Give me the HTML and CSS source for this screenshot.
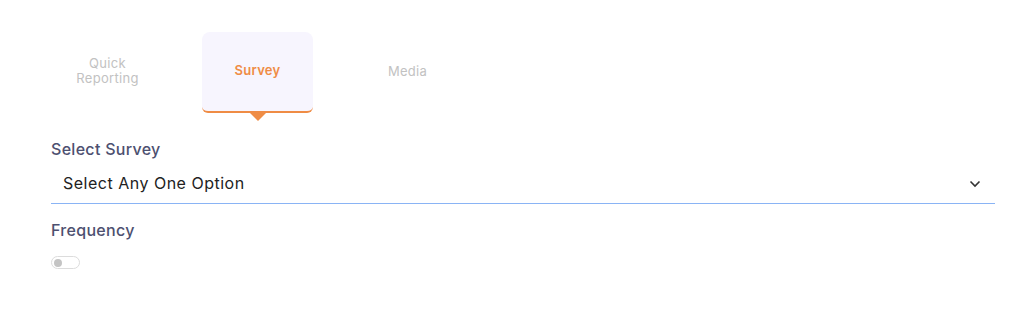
FILE: index.html
```html
<!DOCTYPE html>
<html>
<head>
<meta charset="utf-8">
<link rel="stylesheet" href="styles.css">
</head>
<body>
<div class="page">
  <div class="tabs">
    <div class="tab">Quick<br>Reporting</div>
    <div class="tab active">Survey</div>
    <div class="tab">Media</div>
  </div>
  <div class="field">
    <div class="label">Select Survey</div>
    <div class="select">
      <span>Select Any One Option</span>
      <svg class="chev" width="12" height="8" viewBox="0 0 12 8"><path d="M1.5 1.5 L6 6 L10.5 1.5" fill="none" stroke="#333" stroke-width="1.6"/></svg>
    </div>
  </div>
  <div class="field freq">
    <div class="label">Frequency</div>
    <div class="toggle"><span class="knob"></span></div>
  </div>
</div>
</body>
</html>
```
FILE: styles.css
```css
* { box-sizing: border-box; }
body {
  margin: 0;
  background: #fff;
  font-family: Inter, "Open Sans", sans-serif;
}
.page {
  padding: 32px 20px 0 51px;
}
.tabs {
  display: flex;
  gap: 39px;
  margin-left: 1px;
}
.tab {
  width: 111px;
  height: 81px;
  padding-bottom: 3px;
  display: flex;
  align-items: center;
  justify-content: center;
  text-align: center;
  font-size: 13px;
  line-height: 15px;
  letter-spacing: 0.3px;
  color: #c2c2c2;
  border-radius: 8px;
  position: relative;
}
.tab.active {
  background: #f7f5fe;
  color: #ef8c45;
  font-weight: 600;
  border-bottom: 2px solid #ef8c45;
  border-radius: 8px 8px 6px 6px;
}
.tab.active::after {
  content: "";
  position: absolute;
  left: 50%;
  bottom: -10px;
  margin-left: -8px;
  border-left: 8px solid transparent;
  border-right: 8px solid transparent;
  border-top: 8px solid #ef8c45;
}
.field .label {
  font-size: 16px;
  color: #4d5070;
  font-weight: 500;
  line-height: 20px;
  letter-spacing: 0.3px;
}
.field {
  margin-top: 26px;
}
.select {
  margin-top: 14px;
  display: flex;
  align-items: center;
  justify-content: space-between;
  padding: 0 14px 10px 12px;
  border-bottom: 1px solid #8ab4f5;
  font-size: 16px;
  color: #222;
  line-height: 20px;
  letter-spacing: 0.5px;
}
.chev { margin-top: 2px; }
.freq { margin-top: 16px; }
.toggle {
  margin-top: 16px;
  width: 29px;
  height: 13px;
  border: 1px solid #dcdcdc;
  border-radius: 7px;
  position: relative;
}
.knob {
  position: absolute;
  left: 2px;
  top: 1.5px;
  width: 8px;
  height: 8px;
  border-radius: 50%;
  background: #c4c4c4;
}
```
